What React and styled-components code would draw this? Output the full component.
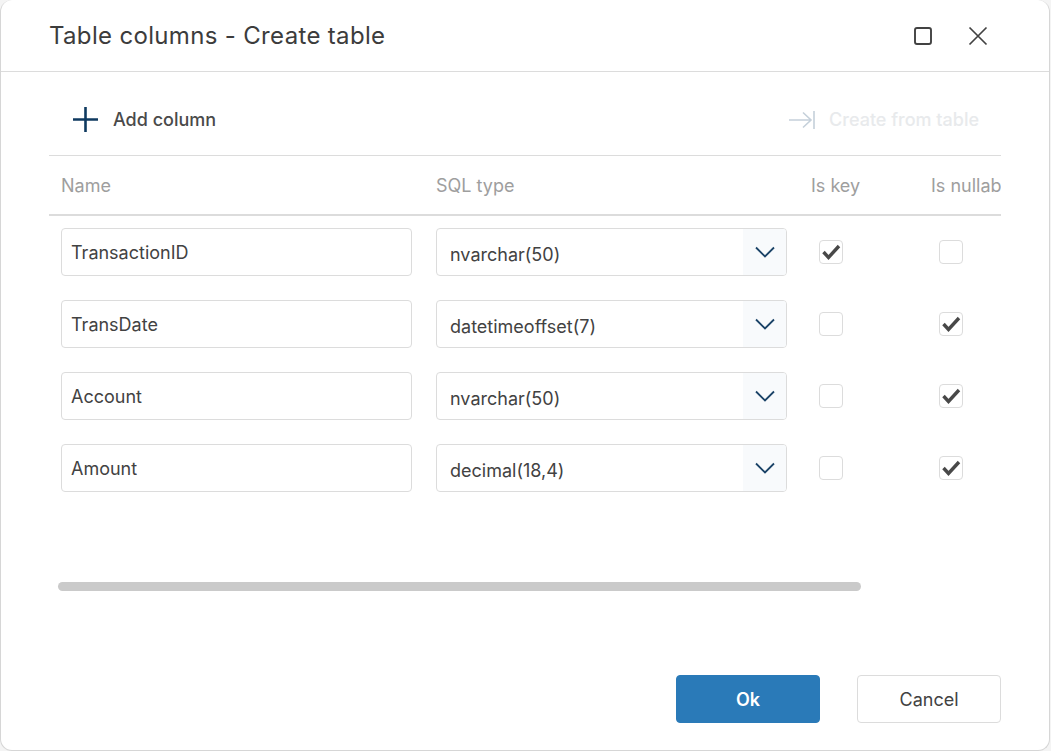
import React from "react";
import styled, { createGlobalStyle } from "styled-components";

const Global = createGlobalStyle`
  html, body { margin: 0; padding: 0; background: #f4f4f4; }
  body { font-family: "Inter", "Liberation Sans", sans-serif; color: #424242; }
  * { box-sizing: border-box; }
`;

const Dialog = styled.div`
  width: 1050px;
  height: 751px;
  background: #fff;
  border: 1px solid #d6d6d6;
  border-top: none;
  border-radius: 12px;
  display: flex;
  flex-direction: column;
  overflow: hidden;
`;

const Header = styled.header`
  height: 72px;
  flex: none;
  display: flex;
  align-items: center;
  padding: 0 60px 0 48px;
  border-bottom: 1px solid #dcdcdc;
`;

const Title = styled.h1`
  flex: 1;
  margin: 0;
  font-size: 24px;
  font-weight: 400;
  letter-spacing: 0.33px;
  line-height: 72px;
  color: #3c3c3c;
`;

const HeaderActions = styled.div`
  display: flex;
  align-items: center;
  gap: 33px;
`;

const IconSlot = styled.span`
  display: flex;
  width: 22px;
  height: 22px;
  align-items: center;
  justify-content: center;
`;

const Body = styled.div`
  flex: 1;
  padding: 0 48px;
  display: flex;
  flex-direction: column;
`;

const Toolbar = styled.div`
  height: 84px;
  flex: none;
  display: flex;
  align-items: center;
  justify-content: space-between;
  padding: 12px 22px 0 23px;
  border-bottom: 1px solid #dcdcdc;
`;

const ToolButton = styled.div`
  display: flex;
  align-items: center;
  gap: 14px;
  font-size: 18px;
  font-weight: 500;
  color: ${(p) => (p.$disabled ? "#e8eaec" : "#4a4a4a")};
`;

const ColumnsTable = styled.div`
  overflow: hidden;
  width: 952px;
  flex: none;
`;

const HeadRow = styled.div`
  display: grid;
  grid-template-columns: 375px 375px 120px 120px;
  height: 60px;
  align-items: center;
  border-bottom: 2px solid #dcdcdc;
`;

const HeadCell = styled.div`
  padding-left: 12px;
  font-size: 18px;
  font-weight: 400;
  color: #9e9e9e;
  white-space: nowrap;
`;

const Rows = styled.div`
  display: flex;
  flex-direction: column;
  gap: 24px;
  padding-top: 12px;
`;

const Row = styled.div`
  display: grid;
  grid-template-columns: 375px 375px 120px 120px;
  height: 48px;
  align-items: center;
`;

const Cell = styled.div`
  padding-left: 12px;
  padding-right: 12px;
`;

const CheckCell = styled.div`
  padding-left: 20px;
  margin-top: -1px;
`;

const TextInput = styled.div`
  height: 48px;
  border: 1px solid #dcdcdc;
  border-radius: 4px;
  padding: 0 9px;
  display: flex;
  align-items: center;
  font-size: 18px;
  color: #424242;
`;

const Select = styled.div`
  height: 48px;
  border: 1px solid #dcdcdc;
  border-radius: 4px;
  display: flex;
  overflow: hidden;
  font-size: 18px;
  color: #424242;
`;

const SelectValue = styled.div`
  flex: 1;
  padding: 4px 0 0 13px;
  display: flex;
  align-items: center;
`;

const SelectArrow = styled.div`
  width: 43px;
  background: #f8fafc;
  display: flex;
  align-items: center;
  justify-content: center;
`;

const CheckBox = styled.div`
  width: 24px;
  height: 24px;
  border: 1px solid #dcdcdc;
  border-radius: 4px;
  background: #fff;
  display: flex;
  align-items: center;
  justify-content: center;
`;

const ScrollTrack = styled.div`
  margin: 90px 0 0 9px;
  width: 803px;
  height: 9px;
  flex: none;
`;

const ScrollThumb = styled.div`
  height: 100%;
  border-radius: 5px;
  background: #cacaca;
`;

const Footer = styled.footer`
  margin-top: 84px;
  display: flex;
  justify-content: flex-end;
  gap: 37px;
`;

const Button = styled.button`
  width: 144px;
  height: 48px;
  border-radius: 4px;
  font-family: inherit;
  font-size: 18px;
  font-weight: ${(p) => (p.$primary ? 600 : 400)};
  color: ${(p) => (p.$primary ? "#fff" : "#424242")};
  background: ${(p) => (p.$primary ? "#2a7ab8" : "#fff")};
  border: 1px solid ${(p) => (p.$primary ? "#2a7ab8" : "#dcdcdc")};
  padding: 0;
`;

const Check = () => (
  <svg width="20" height="20" viewBox="0 0 20 20" fill="none">
    <path d="M2.5 10 L7.5 15.5 L18 4" stroke="#484848" strokeWidth="3.4" />
  </svg>
);

const Chevron = () => (
  <svg width="20" height="12" viewBox="0 0 20 12" fill="none">
    <path d="M1 1.5 L10 10.5 L19 1.5" stroke="#1c4468" strokeWidth="1.8" />
  </svg>
);

const rows = [
  { name: "TransactionID", type: "nvarchar(50)", key: true, nullable: false },
  { name: "TransDate", type: "datetimeoffset(7)", key: false, nullable: true },
  { name: "Account", type: "nvarchar(50)", key: false, nullable: true },
  { name: "Amount", type: "decimal(18,4)", key: false, nullable: true },
];

export default function App() {
  return (
    <>
      <Global />
      <Dialog>
        <Header>
          <Title>Table columns - Create table</Title>
          <HeaderActions>
            <IconSlot>
              <svg width="20" height="20" viewBox="0 0 20 20" fill="none">
                <rect x="2" y="2" width="16" height="16" rx="2" stroke="#424242" strokeWidth="1.9" />
              </svg>
            </IconSlot>
            <IconSlot>
              <svg width="20" height="20" viewBox="0 0 20 20" fill="none">
                <path d="M1.5 1.5 L18.5 18.5 M18.5 1.5 L1.5 18.5" stroke="#424242" strokeWidth="1.7" />
              </svg>
            </IconSlot>
          </HeaderActions>
        </Header>
        <Body>
          <Toolbar>
            <ToolButton>
              <svg width="27" height="27" viewBox="0 0 27 27" fill="none">
                <path d="M13.5 1 V26 M1 13.5 H26" stroke="#0f3a60" strokeWidth="2.6" />
              </svg>
              Add column
            </ToolButton>
            <ToolButton $disabled>
              <svg width="26" height="18" viewBox="0 0 26 18" fill="none">
                <path d="M0 9 H22 M14 1.5 L22 9 L14 16.5 M25 0 V18" stroke="#c5d0da" strokeWidth="1.6" />
              </svg>
              Create from table
            </ToolButton>
          </Toolbar>
          <ColumnsTable>
            <HeadRow>
              <HeadCell>Name</HeadCell>
              <HeadCell>SQL type</HeadCell>
              <HeadCell>Is key</HeadCell>
              <HeadCell>Is nullable</HeadCell>
            </HeadRow>
            <Rows>
              {rows.map((r) => (
                <Row key={r.name}>
                  <Cell>
                    <TextInput>{r.name}</TextInput>
                  </Cell>
                  <Cell>
                    <Select>
                      <SelectValue>{r.type}</SelectValue>
                      <SelectArrow>
                        <Chevron />
                      </SelectArrow>
                    </Select>
                  </Cell>
                  <CheckCell>
                    <CheckBox>{r.key && <Check />}</CheckBox>
                  </CheckCell>
                  <CheckCell>
                    <CheckBox>{r.nullable && <Check />}</CheckBox>
                  </CheckCell>
                </Row>
              ))}
            </Rows>
          </ColumnsTable>
          <ScrollTrack>
            <ScrollThumb />
          </ScrollTrack>
          <Footer>
            <Button $primary>Ok</Button>
            <Button>Cancel</Button>
          </Footer>
        </Body>
      </Dialog>
    </>
  );
}
